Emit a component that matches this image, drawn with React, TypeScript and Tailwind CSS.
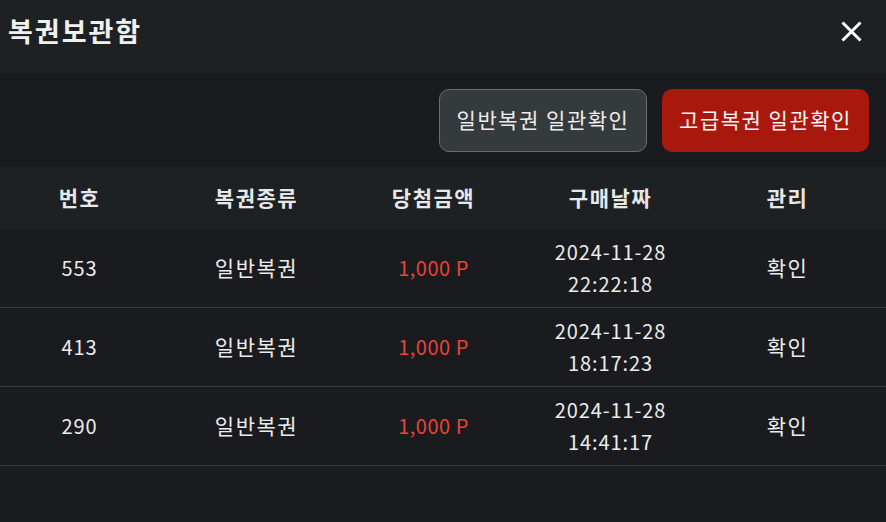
import React from "react";

const rows = [
  { no: "553", type: "일반복권", amt: "1,000 P", date: "2024-11-28", time: "22:22:18" },
  { no: "413", type: "일반복권", amt: "1,000 P", date: "2024-11-28", time: "18:17:23" },
  { no: "290", type: "일반복권", amt: "1,000 P", date: "2024-11-28", time: "14:41:17" },
];

export default function App() {
  return (
    <div
      className="w-[886px] h-[522px] bg-[#1a1b1e] text-[#ececec] overflow-hidden flex flex-col"
      style={{ fontFamily: '"Noto Sans CJK KR", "Noto Sans", sans-serif' }}
    >
      <div className="h-[73px] bg-[#1e2123] flex items-start justify-between pl-[8px] pr-[24px] shrink-0">
        <div className="mt-[17px] text-[27px] leading-[27px] font-bold tracking-[2px] text-[#f0f0f0]">복권보관함</div>
        <svg width="21" height="21" viewBox="0 0 21 21" className="mt-[21px]">
          <path d="M1.5 1.5 L19.5 19.5 M19.5 1.5 L1.5 19.5" stroke="#ffffff" strokeWidth="3" />
        </svg>
      </div>
      <div className="h-[94px] flex items-center justify-end gap-[15px] pr-[17px] shrink-0">
        <button className="w-[208px] h-[63px] rounded-[10px] bg-[#353a3c] border border-[#6e6c66] text-[21px] tracking-[1.5px] text-[#ececec]">
          일반복권 일관확인
        </button>
        <button className="w-[207px] h-[63px] rounded-[10px] bg-[#a9180d] text-[21px] tracking-[1.5px] text-[#f5f5f5]">
          고급복권 일관확인
        </button>
      </div>
      <div className="bg-[#1e2123] h-[62px] grid grid-cols-[177px_177px_177px_177px_177px] ml-[-9px] items-center text-[21px] tracking-[1.5px] font-bold text-[#e8e8e8] shrink-0">
        <div className="text-center">번호</div>
        <div className="text-center">복권종류</div>
        <div className="text-center">당첨금액</div>
        <div className="text-center">구매날짜</div>
        <div className="text-center">관리</div>
      </div>
      {rows.map((r) => (
        <div
          key={r.no}
          className="h-[79px] grid grid-cols-[177px_177px_177px_177px_177px] ml-[-9px] items-center border-b border-[#3a3b3d] text-[20px] shrink-0"
        >
          <div className="text-center tracking-[0.9px]">{r.no}</div>
          <div className="text-center text-[21px] tracking-[1.5px]">{r.type}</div>
          <div className="text-center tracking-[0.5px] text-[#e8443a]">{r.amt}</div>
          <div className="text-center leading-[32px] tracking-[0.9px]">
            <div>{r.date}</div>
            <div>{r.time}</div>
          </div>
          <div className="text-center text-[21px] tracking-[1.5px]">확인</div>
        </div>
      ))}
    </div>
  );
}
